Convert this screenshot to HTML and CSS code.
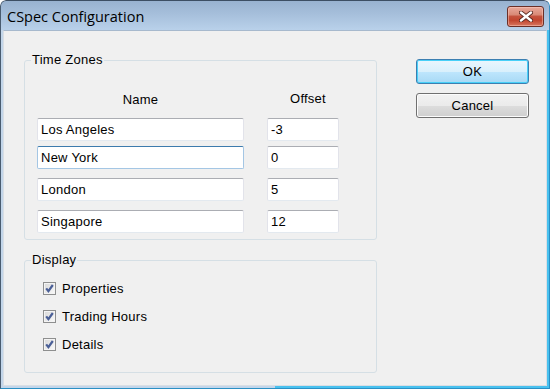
FILE: index.html
```html
<!DOCTYPE html>
<html>
<head>
<meta charset="utf-8">
<link rel="stylesheet" href="styles.css">
</head>
<body>
<div class="window">
  <div class="titlebar">
    <span class="title">CSpec Configuration</span>
    <span class="close-btn">
      <svg width="14" height="11" viewBox="0 0 14 11">
        <path d="M2 1.5 L12 9.5 M12 1.5 L2 9.5" stroke="#5a2a22" stroke-width="4.2" stroke-linecap="round"/>
        <path d="M2 1.5 L12 9.5 M12 1.5 L2 9.5" stroke="#ffffff" stroke-width="2.4" stroke-linecap="round"/>
      </svg>
    </span>
  </div>
  <div class="frame">
    <div class="client">
      <div class="left-col">
        <fieldset class="group tz">
          <legend>Time Zones</legend>
          <div class="tz-grid">
            <div class="col-head">Name</div>
            <div class="col-head offset-head">Offset</div>
            <div class="textbox row1">Los Angeles</div>
            <div class="textbox row1">-3</div>
            <div class="textbox focused row2">New York</div>
            <div class="textbox row2">0</div>
            <div class="textbox row3">London</div>
            <div class="textbox row3">5</div>
            <div class="textbox row4">Singapore</div>
            <div class="textbox row4">12</div>
          </div>
        </fieldset>
        <fieldset class="group display">
          <legend>Display</legend>
          <div class="checks">
            <div class="check"><span class="box"><svg width="11" height="11" viewBox="0 0 11 11"><path d="M2.2 5.4 L4.4 8.2 L8.8 2" fill="none" stroke="#4a5f97" stroke-width="2.2"/></svg></span><span>Properties</span></div>
            <div class="check"><span class="box"><svg width="11" height="11" viewBox="0 0 11 11"><path d="M2.2 5.4 L4.4 8.2 L8.8 2" fill="none" stroke="#4a5f97" stroke-width="2.2"/></svg></span><span>Trading Hours</span></div>
            <div class="check"><span class="box"><svg width="11" height="11" viewBox="0 0 11 11"><path d="M2.2 5.4 L4.4 8.2 L8.8 2" fill="none" stroke="#4a5f97" stroke-width="2.2"/></svg></span><span>Details</span></div>
          </div>
        </fieldset>
      </div>
      <div class="right-col">
        <div class="btn default">OK</div>
        <div class="btn">Cancel</div>
      </div>
    </div>
  </div>
</div>
</body>
</html>
```

FILE: styles.css
```css
html, body {
  margin: 0;
  padding: 0;
  background: #ffffff;
}
body {
  font-family: "Liberation Sans", Arial, sans-serif;
  font-size: 13px;
  letter-spacing: 0.25px;
  color: #000;
}
.window {
  width: 550px;
  height: 389px;
  display: flex;
  flex-direction: column;
  overflow: hidden;
  border-radius: 6px 6px 0 0;
}
.titlebar {
  height: 30px;
  box-sizing: border-box;
  display: flex;
  align-items: center;
  justify-content: space-between;
  background: linear-gradient(to bottom, #98b2d0 0%, #a6bfdb 45%, #b9d1ea 100%);
  border-top: 1px solid #3c4e63;
  border-left: 1px solid #4a5c70;
  border-right: 1px solid #3a8fc0;
  border-radius: 6px 6px 0 0;
  padding: 0 5px 0 6px;
}
.title {
  font-family: "Open Sans", "Noto Sans", sans-serif;
  font-size: 14.5px;
  letter-spacing: 0;
  color: #000;
  padding-top: 1px;
}
.close-btn {
  width: 37px;
  height: 21px;
  box-sizing: border-box;
  margin-top: 1px;
  border: 1px solid #6b2f27;
  border-radius: 3px;
  background: linear-gradient(to bottom, #e9a99b 0%, #d98a77 40%, #c4523d 50%, #c1452f 70%, #d87760 100%);
  box-shadow: inset 0 0 0 1px rgba(255,210,200,0.45);
  display: flex;
  align-items: center;
  justify-content: center;
}
.frame {
  flex: 1;
  display: flex;
  border-left: 1px solid #4a5c70;
  border-right: 1px solid #2a8fc4;
  border-bottom: 1px solid #2a8fc4;
  background: linear-gradient(to right, #c3d6ea 0, #c3d6ea 50%, #48c1ef 50%);
  padding: 0 2px 2px 2px;
}
.client {
  flex: 1;
  display: flex;
  background: #f0f0f0;
  border: 1px solid #d9dee4;
  border-top-color: #a7b9cd;
  padding: 21px 17px 0 20px;
  align-items: flex-start;
}
.left-col {
  width: 353px;
  display: flex;
  flex-direction: column;
  gap: 12px;
}
.right-col {
  width: 113px;
  margin-left: 39px;
  margin-top: 7px;
  display: flex;
  flex-direction: column;
  gap: 9px;
}
.group {
  margin: 0;
  padding: 0;
  border: 1px solid #d5dfe5;
  border-radius: 3px;
  min-width: 0;
}
.group legend {
  margin-left: 6px;
  padding: 0 1px;
  line-height: 16px;
  height: 16px;
}
.tz-grid {
  display: grid;
  grid-template-columns: 207px 72px;
  column-gap: 23px;
  padding: 24px 0 6px 12px;
}
.col-head {
  text-align: center;
  line-height: 16px;
  margin-bottom: 10px;
}
.offset-head {
  margin-left: 10px;
  margin-top: -1px;
  margin-bottom: 11px;
}
.textbox {
  height: 23px;
  box-sizing: border-box;
  background: #fff;
  border: 1px solid #e2e3ea;
  border-top-color: #abadb3;
  border-bottom-color: #e3e9ef;
  border-radius: 2px;
  padding-left: 3px;
  line-height: 21px;
  white-space: nowrap;
}
.textbox.focused {
  border-color: #a4c6e4;
  border-top-color: #3d7bad;
}
.row2 { margin-top: 5px; }
.row3, .row4 { margin-top: 9px; }
.checks {
  display: flex;
  flex-direction: column;
  gap: 12px;
  padding: 12px 0 20px 18px;
}
.check {
  display: flex;
  align-items: center;
  height: 16px;
  gap: 6px;
}
.box {
  width: 13px;
  height: 13px;
  box-sizing: border-box;
  border: 1px solid #8e8f8f;
  background: linear-gradient(135deg, #d9d9d9 0%, #e8e8e8 50%, #fbfbfb 100%);
  box-shadow: inset 0 0 0 1px #f4f4f4;
  display: flex;
  align-items: center;
  justify-content: center;
}
.btn {
  height: 25px;
  box-sizing: border-box;
  border: 1px solid #707070;
  border-radius: 3px;
  background: linear-gradient(to bottom, #f2f2f2 0%, #ebebeb 50%, #dddddd 51%, #cfcfcf 100%);
  box-shadow: inset 0 0 0 1px #fcfcfc;
  text-align: center;
  line-height: 23px;
}
.btn.default {
  border-color: #3c7fb1;
  background: linear-gradient(to bottom, #eaf6fd 0%, #d9f0fc 50%, #bee6fd 51%, #a7d9f5 100%);
  box-shadow: inset 0 0 0 1px #48d0f8;
}
```
